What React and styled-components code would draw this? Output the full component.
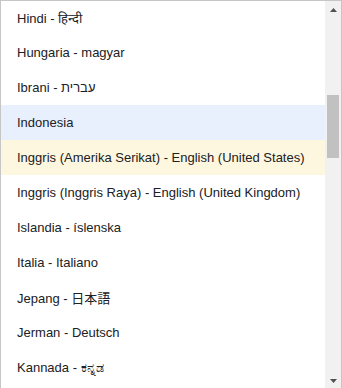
import React from "react";
import styled, { createGlobalStyle } from "styled-components";

const GlobalStyle = createGlobalStyle`
  html, body {
    margin: 0;
    padding: 0;
    background: #ffffff;
  }
  body {
    font-family: "Liberation Sans", Arial, "DejaVu Sans", "Noto Sans CJK JP", sans-serif;
  }
`;

const languages = [
  { label: "Hindi - हिन्दी" },
  { label: "Hungaria - magyar" },
  { label: "Ibrani - עברית" },
  { label: "Indonesia", state: "selected" },
  { label: "Inggris (Amerika Serikat) - English (United States)", state: "hover" },
  { label: "Inggris (Inggris Raya) - English (United Kingdom)" },
  { label: "Islandia - íslenska" },
  { label: "Italia - Italiano" },
  { label: "Jepang - 日本語" },
  { label: "Jerman - Deutsch" },
  { label: "Kannada - ಕನ್ನಡ" },
];

const rowBackground = {
  selected: "#e8f0fe",
  hover: "#fef7e0",
};

function App() {
  return (
    <>
      <GlobalStyle />
      <Dropdown>
        <List>
          {languages.map((lang) => (
            <Option key={lang.label} $state={lang.state}>
              {lang.label}
            </Option>
          ))}
        </List>
        <Scrollbar>
          <Arrow viewBox="0 0 7 4">
            <path d="M0 4 L3.5 0 L7 4 Z" />
          </Arrow>
          <Track>
            <Thumb />
          </Track>
          <Arrow viewBox="0 0 7 4">
            <path d="M0 0 L7 0 L3.5 4 Z" />
          </Arrow>
        </Scrollbar>
      </Dropdown>
    </>
  );
}

const Dropdown = styled.div`
  width: 342px;
  height: 388px;
  box-sizing: border-box;
  display: flex;
  border: 1px solid #c6c6c6;
  border-bottom: none;
  overflow: hidden;
  background: #ffffff;
`;

const List = styled.ul`
  flex: 1;
  margin: -1px 0 0 0;
  padding: 0;
  list-style: none;
  overflow: hidden;
`;

const Option = styled.li`
  height: 35px;
  display: flex;
  align-items: center;
  padding-left: 16px;
  font-size: 13px;
  color: #202124;
  white-space: nowrap;
  background: ${(p) => rowBackground[p.$state] || "transparent"};
`;

const Scrollbar = styled.div`
  width: 16px;
  flex-shrink: 0;
  display: flex;
  flex-direction: column;
  align-items: center;
  background: #f1f1f1;
  padding: 7px 0 5px;
  box-sizing: border-box;
`;

const Arrow = styled.svg`
  width: 7px;
  height: 4px;
  fill: #505050;
  flex-shrink: 0;
`;

const Track = styled.div`
  flex: 1;
  width: 100%;
  padding-top: 83px;
  box-sizing: border-box;
  display: flex;
  justify-content: center;
`;

const Thumb = styled.div`
  width: 12px;
  height: 63px;
  background: #c1c1c1;
`;

export default App;
